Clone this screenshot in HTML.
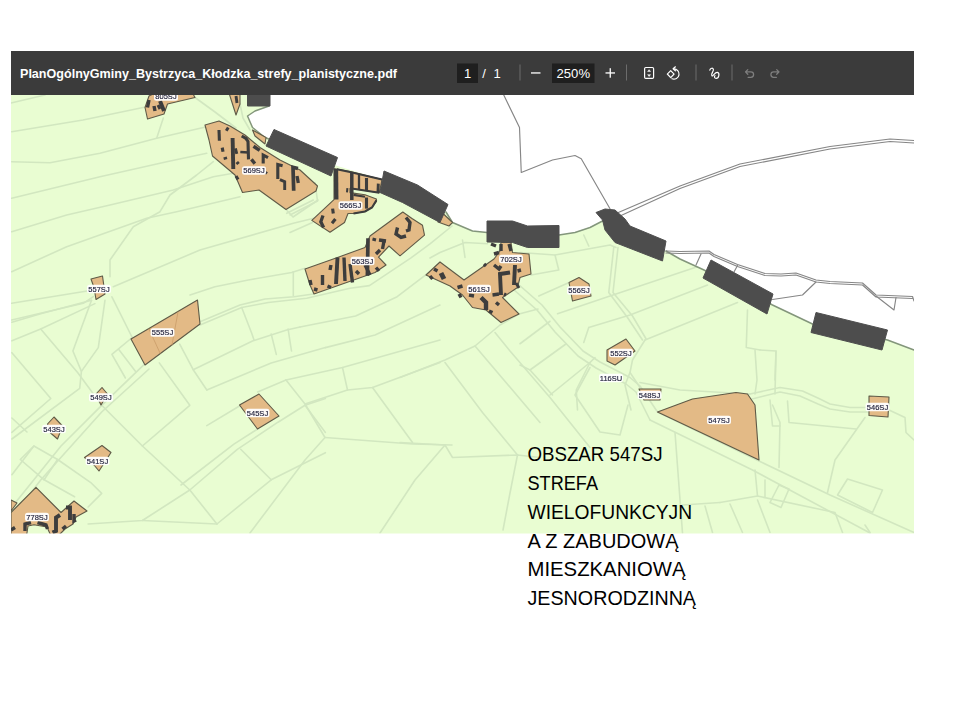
<!DOCTYPE html>
<html lang="pl">
<head>
<meta charset="utf-8">
<title>Obszar 547SJ</title>
<style>
html,body{margin:0;padding:0;background:#ffffff;}
body{width:960px;height:720px;overflow:hidden;position:relative;font-family:"Liberation Sans",sans-serif;}
svg{display:block}
</style>
</head>
<body>
<svg width="960" height="720" viewBox="0 0 960 720" style="position:absolute;left:0;top:0">
<defs>
<clipPath id="mc"><rect x="11" y="51" width="903" height="482.6"/></clipPath>
<filter id="bl" x="-2%" y="-2%" width="104%" height="104%"><feGaussianBlur stdDeviation="0.7"/></filter>
<filter id="bl2" x="-2%" y="-20%" width="104%" height="140%"><feGaussianBlur stdDeviation="0.35"/></filter>
</defs>
<rect x="0" y="0" width="960" height="720" fill="#ffffff"/>
<g clip-path="url(#mc)">
<g filter="url(#bl)">
<rect x="5" y="85" width="915" height="455" fill="#e9fdd2"/>
<polyline points="11,103 45,95" fill="none" stroke="#d2e7c0" stroke-width="1.6" stroke-linejoin="round" stroke-linecap="round" />
<polyline points="11.7,131.7 83,120 146.7,106.7" fill="none" stroke="#d2e7c0" stroke-width="1.6" stroke-linejoin="round" stroke-linecap="round" />
<polyline points="11.7,161.7 50,162.7 100,153.3 156.7,138.3 206.7,126.7" fill="none" stroke="#d2e7c0" stroke-width="1.6" stroke-linejoin="round" stroke-linecap="round" />
<polyline points="156.7,138.3 163.3,118" fill="none" stroke="#d2e7c0" stroke-width="1.6" stroke-linejoin="round" stroke-linecap="round" />
<polyline points="11.7,198.3 100,176.7 166.7,161.7 206.7,153.3" fill="none" stroke="#d2e7c0" stroke-width="1.6" stroke-linejoin="round" stroke-linecap="round" />
<polyline points="11.7,231.7 66.7,215 110,205 173.3,190 213.3,176.7 233.3,173.3" fill="none" stroke="#d2e7c0" stroke-width="1.6" stroke-linejoin="round" stroke-linecap="round" />
<polyline points="11.7,271.7 66.7,246.7 146.7,218.3 176.7,211.7 240,196.7" fill="none" stroke="#d2e7c0" stroke-width="1.6" stroke-linejoin="round" stroke-linecap="round" />
<polyline points="110,276.7 110,260 133.3,226.7 160,211.7 170,195 196.7,175 213.3,161.7" fill="none" stroke="#d2e7c0" stroke-width="1.6" stroke-linejoin="round" stroke-linecap="round" />
<polyline points="113.3,286.7 200,250 293.3,223.3 320,216.7" fill="none" stroke="#d2e7c0" stroke-width="1.6" stroke-linejoin="round" stroke-linecap="round" />
<polyline points="190,295 215,286.7 248.3,280 291.7,272.5 305,268.3" fill="none" stroke="#d2e7c0" stroke-width="1.6" stroke-linejoin="round" stroke-linecap="round" />
<polyline points="293.3,271.7 293.3,296" fill="none" stroke="#d2e7c0" stroke-width="1.6" stroke-linejoin="round" stroke-linecap="round" />
<polyline points="11.7,303.3 93.3,290" fill="none" stroke="#d2e7c0" stroke-width="1.6" stroke-linejoin="round" stroke-linecap="round" />
<polyline points="11.7,320 83.3,303.3 93.3,296.7" fill="none" stroke="#d2e7c0" stroke-width="1.6" stroke-linejoin="round" stroke-linecap="round" />
<polyline points="286.7,213.3 313.3,200" fill="none" stroke="#d2e7c0" stroke-width="1.6" stroke-linejoin="round" stroke-linecap="round" />
<polyline points="240,104 243,118 250,130" fill="none" stroke="#d2e7c0" stroke-width="1.6" stroke-linejoin="round" stroke-linecap="round" />
<polyline points="195,97.5 215,112 236,128" fill="none" stroke="#d2e7c0" stroke-width="1.6" stroke-linejoin="round" stroke-linecap="round" />
<polyline points="286,209.5 293,217 318,200" fill="none" stroke="#d2e7c0" stroke-width="1.6" stroke-linejoin="round" stroke-linecap="round" />
<polyline points="462.5,240 465,257.5" fill="none" stroke="#d2e7c0" stroke-width="1.6" stroke-linejoin="round" stroke-linecap="round" />
<polyline points="290,215 317.5,201 315,182.5" fill="none" stroke="#d2e7c0" stroke-width="1.6" stroke-linejoin="round" stroke-linecap="round" />
<polyline points="290,232.5 312.5,222.5" fill="none" stroke="#d2e7c0" stroke-width="1.6" stroke-linejoin="round" stroke-linecap="round" />
<polyline points="144,364.6 101.7,405.3 61,446 33.9,479.8 11.9,507" fill="none" stroke="#d2e7c0" stroke-width="1.6" stroke-linejoin="round" stroke-linecap="round" />
<polyline points="149,369 101.7,412 40.7,480 20,507" fill="none" stroke="#d2e7c0" stroke-width="1.6" stroke-linejoin="round" stroke-linecap="round" />
<polyline points="111.9,296.8 132.2,337.5" fill="none" stroke="#d2e7c0" stroke-width="1.6" stroke-linejoin="round" stroke-linecap="round" />
<polyline points="11.9,322.2 40.7,313.7 91.5,300.2" fill="none" stroke="#d2e7c0" stroke-width="1.6" stroke-linejoin="round" stroke-linecap="round" />
<polyline points="11.9,340.8 40.7,329 94.9,303.6" fill="none" stroke="#d2e7c0" stroke-width="1.6" stroke-linejoin="round" stroke-linecap="round" />
<polyline points="40.7,329 78,373 101.7,405.3" fill="none" stroke="#d2e7c0" stroke-width="1.6" stroke-linejoin="round" stroke-linecap="round" />
<polyline points="91.5,300.2 72.9,351 81.4,371.4 79.7,388.3 11.9,439" fill="none" stroke="#d2e7c0" stroke-width="1.6" stroke-linejoin="round" stroke-linecap="round" />
<polyline points="105,300.2 98.3,347.6 81.4,371.4" fill="none" stroke="#d2e7c0" stroke-width="1.6" stroke-linejoin="round" stroke-linecap="round" />
<polyline points="132.2,337.5 111.9,354.4 125.4,378" fill="none" stroke="#d2e7c0" stroke-width="1.6" stroke-linejoin="round" stroke-linecap="round" />
<polyline points="118.6,349.3 135.6,371.4" fill="none" stroke="#d2e7c0" stroke-width="1.6" stroke-linejoin="round" stroke-linecap="round" />
<polyline points="11.9,352.7 50.8,398.5 11.9,432.4" fill="none" stroke="#d2e7c0" stroke-width="1.6" stroke-linejoin="round" stroke-linecap="round" />
<polyline points="11.9,418 27,432" fill="none" stroke="#d2e7c0" stroke-width="1.6" stroke-linejoin="round" stroke-linecap="round" />
<polyline points="101.7,405.3 142.4,446 189.8,490 216.9,524" fill="none" stroke="#d2e7c0" stroke-width="1.6" stroke-linejoin="round" stroke-linecap="round" />
<polyline points="142.4,446 189.8,405.3 159.3,362.9" fill="none" stroke="#d2e7c0" stroke-width="1.6" stroke-linejoin="round" stroke-linecap="round" />
<polyline points="193.2,369.7 252.5,341 286.7,330 300,327" fill="none" stroke="#d2e7c0" stroke-width="1.6" stroke-linejoin="round" stroke-linecap="round" />
<polyline points="206.8,390 271.2,362.9 325.4,347.6" fill="none" stroke="#d2e7c0" stroke-width="1.6" stroke-linejoin="round" stroke-linecap="round" />
<polyline points="179.7,344.2 193.2,369.7 206.8,390" fill="none" stroke="#d2e7c0" stroke-width="1.6" stroke-linejoin="round" stroke-linecap="round" />
<polyline points="241.7,307.5 251.7,333.3 254,340" fill="none" stroke="#d2e7c0" stroke-width="1.6" stroke-linejoin="round" stroke-linecap="round" />
<polyline points="271.2,334 276.3,354.4" fill="none" stroke="#d2e7c0" stroke-width="1.6" stroke-linejoin="round" stroke-linecap="round" />
<polyline points="288.1,329 291.5,351" fill="none" stroke="#d2e7c0" stroke-width="1.6" stroke-linejoin="round" stroke-linecap="round" />
<polyline points="200,321.7 240,305 265,299 294,296.7 313.3,294" fill="none" stroke="#d2e7c0" stroke-width="1.6" stroke-linejoin="round" stroke-linecap="round" />
<polyline points="200,325 241.7,307.5 268.3,302.5 306.7,298.3 350,288.3 369.4,285.6 411,257.8 430,243.9 452,226" fill="none" stroke="#d2e7c0" stroke-width="1.6" stroke-linejoin="round" stroke-linecap="round" />
<polyline points="206.8,425.6 240.7,405.3" fill="none" stroke="#d2e7c0" stroke-width="1.6" stroke-linejoin="round" stroke-linecap="round" />
<polyline points="189.8,490 237.3,449.3 278,422.2 305,405.3 325.4,398.5" fill="none" stroke="#d2e7c0" stroke-width="1.6" stroke-linejoin="round" stroke-linecap="round" />
<polyline points="181,485 233.9,444.2 257.6,429" fill="none" stroke="#d2e7c0" stroke-width="1.6" stroke-linejoin="round" stroke-linecap="round" />
<polyline points="240.7,449.3 271.2,479.8 216.9,524" fill="none" stroke="#d2e7c0" stroke-width="1.6" stroke-linejoin="round" stroke-linecap="round" />
<polyline points="271.2,479.8 325.4,452.7" fill="none" stroke="#d2e7c0" stroke-width="1.6" stroke-linejoin="round" stroke-linecap="round" />
<polyline points="305,405.3 325.4,432.4" fill="none" stroke="#d2e7c0" stroke-width="1.6" stroke-linejoin="round" stroke-linecap="round" />
<polyline points="11.9,474.7 33.9,446 57.6,459.5 91.5,483.2 101.7,493.4 88.1,507" fill="none" stroke="#d2e7c0" stroke-width="1.6" stroke-linejoin="round" stroke-linecap="round" />
<polyline points="33.9,446 20.3,459.5 44.1,479.8" fill="none" stroke="#d2e7c0" stroke-width="1.6" stroke-linejoin="round" stroke-linecap="round" />
<polyline points="57.6,459.5 44.1,479.8 74.6,496.8" fill="none" stroke="#d2e7c0" stroke-width="1.6" stroke-linejoin="round" stroke-linecap="round" />
<polyline points="88.1,524 142.4,520.5 189.8,490" fill="none" stroke="#d2e7c0" stroke-width="1.6" stroke-linejoin="round" stroke-linecap="round" />
<polyline points="142.4,520.5 216.9,524" fill="none" stroke="#d2e7c0" stroke-width="1.6" stroke-linejoin="round" stroke-linecap="round" />
<polyline points="300,327 355.6,316 397.2,296.7 430,271.7 440,262" fill="none" stroke="#d2e7c0" stroke-width="1.6" stroke-linejoin="round" stroke-linecap="round" />
<polyline points="325.4,347.6 375,335 440,305" fill="none" stroke="#d2e7c0" stroke-width="1.6" stroke-linejoin="round" stroke-linecap="round" />
<polyline points="286,380 342.5,367.5 440,340" fill="none" stroke="#d2e7c0" stroke-width="1.6" stroke-linejoin="round" stroke-linecap="round" />
<polyline points="286,380 305,404 325,437.5 305,460 250,533" fill="none" stroke="#d2e7c0" stroke-width="1.6" stroke-linejoin="round" stroke-linecap="round" />
<polyline points="257.6,392 286,380" fill="none" stroke="#d2e7c0" stroke-width="1.6" stroke-linejoin="round" stroke-linecap="round" />
<polyline points="342.5,367.5 347.5,390" fill="none" stroke="#d2e7c0" stroke-width="1.6" stroke-linejoin="round" stroke-linecap="round" />
<polyline points="305,404 347.5,390 372.5,387.5 440,362.5" fill="none" stroke="#d2e7c0" stroke-width="1.6" stroke-linejoin="round" stroke-linecap="round" />
<polyline points="372.5,387.5 412.5,442.5" fill="none" stroke="#d2e7c0" stroke-width="1.6" stroke-linejoin="round" stroke-linecap="round" />
<polyline points="325,437.5 412.5,444 452,445" fill="none" stroke="#d2e7c0" stroke-width="1.6" stroke-linejoin="round" stroke-linecap="round" />
<polyline points="400,377.5 445,360 475,346 500,325 519,314 538,309" fill="none" stroke="#d2e7c0" stroke-width="1.6" stroke-linejoin="round" stroke-linecap="round" />
<polyline points="445,362.5 482.5,412.5 517.5,455" fill="none" stroke="#d2e7c0" stroke-width="1.6" stroke-linejoin="round" stroke-linecap="round" />
<polyline points="475,346 540,422.5" fill="none" stroke="#d2e7c0" stroke-width="1.6" stroke-linejoin="round" stroke-linecap="round" />
<polyline points="495,332.5 510,351 550,397.5 590,447.5" fill="none" stroke="#d2e7c0" stroke-width="1.6" stroke-linejoin="round" stroke-linecap="round" />
<polyline points="518,284 542,305 560,327 583,351 600,362 630,377.5 640,386 657.5,412" fill="none" stroke="#d2e7c0" stroke-width="1.6" stroke-linejoin="round" stroke-linecap="round" />
<polyline points="513,289 537,310 555,332 578,356 596,368 626,384 636,392 650,420" fill="none" stroke="#d2e7c0" stroke-width="1.6" stroke-linejoin="round" stroke-linecap="round" />
<polyline points="400,442.5 445,445 452.5,457.5 517.5,455 540,457.5" fill="none" stroke="#d2e7c0" stroke-width="1.6" stroke-linejoin="round" stroke-linecap="round" />
<polyline points="445,445 415,480 380,533" fill="none" stroke="#d2e7c0" stroke-width="1.6" stroke-linejoin="round" stroke-linecap="round" />
<polyline points="517.5,455 510,493 503,530" fill="none" stroke="#d2e7c0" stroke-width="1.6" stroke-linejoin="round" stroke-linecap="round" />
<polyline points="430,258 440,252.5 465,242.5 487.5,243.75" fill="none" stroke="#d2e7c0" stroke-width="1.6" stroke-linejoin="round" stroke-linecap="round" />
<polyline points="520,252.5 555,255 558.75,270 531,275" fill="none" stroke="#d2e7c0" stroke-width="1.6" stroke-linejoin="round" stroke-linecap="round" />
<polyline points="555,255 610,245 616,247.5" fill="none" stroke="#d2e7c0" stroke-width="1.6" stroke-linejoin="round" stroke-linecap="round" />
<polyline points="583.75,235 588.75,246" fill="none" stroke="#d2e7c0" stroke-width="1.6" stroke-linejoin="round" stroke-linecap="round" />
<polyline points="613.75,247.5 608.75,292.5 627.5,317.5 642.5,340" fill="none" stroke="#d2e7c0" stroke-width="1.6" stroke-linejoin="round" stroke-linecap="round" />
<polyline points="618,247.5 613,292.5 632.5,316 646,338.75" fill="none" stroke="#d2e7c0" stroke-width="1.6" stroke-linejoin="round" stroke-linecap="round" />
<polyline points="645,340 632.5,360 630,372.5 640,387.5" fill="none" stroke="#d2e7c0" stroke-width="1.6" stroke-linejoin="round" stroke-linecap="round" />
<polyline points="557.5,313.75 610,296 695,267.5 705,263.75" fill="none" stroke="#d2e7c0" stroke-width="1.6" stroke-linejoin="round" stroke-linecap="round" />
<polyline points="588.75,327.5 630,315 707.5,285" fill="none" stroke="#d2e7c0" stroke-width="1.6" stroke-linejoin="round" stroke-linecap="round" />
<polyline points="645,340 737.5,302.5" fill="none" stroke="#d2e7c0" stroke-width="1.6" stroke-linejoin="round" stroke-linecap="round" />
<polyline points="588.75,327.5 583.75,342.5" fill="none" stroke="#d2e7c0" stroke-width="1.6" stroke-linejoin="round" stroke-linecap="round" />
<polyline points="538.75,296 568,283" fill="none" stroke="#d2e7c0" stroke-width="1.6" stroke-linejoin="round" stroke-linecap="round" />
<polyline points="520,343.75 550,321.25" fill="none" stroke="#d2e7c0" stroke-width="1.6" stroke-linejoin="round" stroke-linecap="round" />
<polyline points="530,370 566.25,343.75" fill="none" stroke="#d2e7c0" stroke-width="1.6" stroke-linejoin="round" stroke-linecap="round" />
<polyline points="520,365 530,370 552.5,395" fill="none" stroke="#d2e7c0" stroke-width="1.6" stroke-linejoin="round" stroke-linecap="round" />
<polyline points="550,395 590,362.5 595,357.5" fill="none" stroke="#d2e7c0" stroke-width="1.6" stroke-linejoin="round" stroke-linecap="round" />
<polyline points="577.5,410 576.25,390 590,362.5" fill="none" stroke="#d2e7c0" stroke-width="1.6" stroke-linejoin="round" stroke-linecap="round" />
<polyline points="747.5,310 746.25,347.5 760,350" fill="none" stroke="#d2e7c0" stroke-width="1.6" stroke-linejoin="round" stroke-linecap="round" />
<polyline points="630,372.5 625,385 631,410" fill="none" stroke="#d2e7c0" stroke-width="1.6" stroke-linejoin="round" stroke-linecap="round" />
<polyline points="640,382.5 680,390 750,394" fill="none" stroke="#d2e7c0" stroke-width="1.6" stroke-linejoin="round" stroke-linecap="round" />
<polyline points="760,350 776,351 775,380" fill="none" stroke="#d2e7c0" stroke-width="1.6" stroke-linejoin="round" stroke-linecap="round" />
<polyline points="590,367.5 575,395 600,432 620,435 628,405" fill="none" stroke="#d2e7c0" stroke-width="1.6" stroke-linejoin="round" stroke-linecap="round" />
<polyline points="755,350 757,380 755,394" fill="none" stroke="#d2e7c0" stroke-width="1.6" stroke-linejoin="round" stroke-linecap="round" />
<polyline points="776,351 775,394" fill="none" stroke="#d2e7c0" stroke-width="1.6" stroke-linejoin="round" stroke-linecap="round" />
<polyline points="750,394 780,387.5 802.5,391 820,399 830,404 850,407.5 867.5,407.5" fill="none" stroke="#d2e7c0" stroke-width="1.6" stroke-linejoin="round" stroke-linecap="round" />
<polyline points="752,399 780,392 800,396 818,404 830,409 850,412 868,412" fill="none" stroke="#d2e7c0" stroke-width="1.6" stroke-linejoin="round" stroke-linecap="round" />
<polyline points="772.5,405 780,422.5 779,467.5" fill="none" stroke="#d2e7c0" stroke-width="1.6" stroke-linejoin="round" stroke-linecap="round" />
<polyline points="770,400 772.5,426 780,426" fill="none" stroke="#d2e7c0" stroke-width="1.6" stroke-linejoin="round" stroke-linecap="round" />
<polyline points="787.5,401 789,422.5 856,429" fill="none" stroke="#d2e7c0" stroke-width="1.6" stroke-linejoin="round" stroke-linecap="round" />
<polyline points="865,417.5 835,460 827.5,492.5" fill="none" stroke="#d2e7c0" stroke-width="1.6" stroke-linejoin="round" stroke-linecap="round" />
<polyline points="889,410 905,417.5 906,432.5 914,440" fill="none" stroke="#d2e7c0" stroke-width="1.6" stroke-linejoin="round" stroke-linecap="round" />
<polyline points="847.5,479 882.5,490 872.5,512.5 837.5,495 847.5,479" fill="none" stroke="#d2e7c0" stroke-width="1.6" stroke-linejoin="round" stroke-linecap="round" />
<polyline points="779,485 770,502.5 781,507.5 789,489 779,485" fill="none" stroke="#d2e7c0" stroke-width="1.6" stroke-linejoin="round" stroke-linecap="round" />
<polyline points="765,480 765,497.5" fill="none" stroke="#d2e7c0" stroke-width="1.6" stroke-linejoin="round" stroke-linecap="round" />
<polyline points="720,502.5 757.5,496 755,470" fill="none" stroke="#d2e7c0" stroke-width="1.6" stroke-linejoin="round" stroke-linecap="round" />
<polyline points="730,504 742.5,532.5" fill="none" stroke="#d2e7c0" stroke-width="1.6" stroke-linejoin="round" stroke-linecap="round" />
<polyline points="757.5,500 770,532.5" fill="none" stroke="#d2e7c0" stroke-width="1.6" stroke-linejoin="round" stroke-linecap="round" />
<polyline points="757.5,496 835,512.5 842.5,532.5" fill="none" stroke="#d2e7c0" stroke-width="1.6" stroke-linejoin="round" stroke-linecap="round" />
<polyline points="865,525 870,532.5" fill="none" stroke="#d2e7c0" stroke-width="1.6" stroke-linejoin="round" stroke-linecap="round" />
<polyline points="675,432.5 682.5,533" fill="none" stroke="#d2e7c0" stroke-width="1.6" stroke-linejoin="round" stroke-linecap="round" />
<polyline points="682.5,505 720,502.5" fill="none" stroke="#d2e7c0" stroke-width="1.6" stroke-linejoin="round" stroke-linecap="round" />
<polyline points="705,506 712.5,532.5" fill="none" stroke="#d2e7c0" stroke-width="1.6" stroke-linejoin="round" stroke-linecap="round" />
<polyline points="657.5,412 759,461 830,495 914,532.5" fill="none" stroke="#d2e7c0" stroke-width="1.6" stroke-linejoin="round" stroke-linecap="round" />
<polyline points="650,420 752.5,470 870,533" fill="none" stroke="#d2e7c0" stroke-width="1.6" stroke-linejoin="round" stroke-linecap="round" />
<polygon points="270,90 269,106 255,111 247.5,116 252.5,127.5 265,137.5 274,141 300,152 337.5,166 347.5,169 370,176 384,181 417.5,195 446,212 452.5,222.5 472.5,231 487,232.5 527,236 559,235 575,232.5 590,227.5 602.5,221 615,226 630,236 666,251 680,259 704,270 740,288 772.5,305 812.5,324 850,332 887.5,340 914,350 920,350 920,90" fill="#ffffff" />
<polyline points="269,106 255,111 247.5,116 252.5,127.5 265,137.5 274,141" fill="none" stroke="#83967b" stroke-width="1.5" stroke-linejoin="round" stroke-linecap="round" />
<polyline points="446,212 452.5,222.5 472.5,231 487,232.5" fill="none" stroke="#83967b" stroke-width="1.5" stroke-linejoin="round" stroke-linecap="round" />
<polyline points="559,235 575,232.5 590,227.5 602.5,221" fill="none" stroke="#83967b" stroke-width="1.5" stroke-linejoin="round" stroke-linecap="round" />
<polyline points="666,251 680,259 704,270 740,288 772.5,305 812.5,324 850,332 887.5,340 914,350" fill="none" stroke="#83967b" stroke-width="1.5" stroke-linejoin="round" stroke-linecap="round" />
<polyline points="500,88 503.75,95 519.5,127.5 521.25,172.5 552.5,160 575,155.5 581.25,158.75 610,208.75" fill="none" stroke="#868686" stroke-width="1.15" stroke-linejoin="round" stroke-linecap="round" />
<polyline points="616,213.5 680,186 740,164 830,146.5 890,139 914,140.5" fill="none" stroke="#868686" stroke-width="1.15" stroke-linejoin="round" stroke-linecap="round" />
<polyline points="620,216 680,188.5 740,166.5 830,149 890,141.5 914,143" fill="none" stroke="#868686" stroke-width="1.15" stroke-linejoin="round" stroke-linecap="round" />
<polyline points="666,251 680,251.5 709,251 714,254.5 737.5,264.5 765,273.5 781,274 796,273 816,280 830,281.5 862.5,283 876,295 912.5,296.5 914,301" fill="none" stroke="#868686" stroke-width="1.15" stroke-linejoin="round" stroke-linecap="round" />
<polyline points="666,253 680,253.5 709,253 714,256.5 737.5,266.5 765,275.5 781,276 796,275 816,282 830,283.5 862.5,285 876,297 912.5,298.5" fill="none" stroke="#868686" stroke-width="1.15" stroke-linejoin="round" stroke-linecap="round" />
<polyline points="701,254 696,265" fill="none" stroke="#868686" stroke-width="1.15" stroke-linejoin="round" stroke-linecap="round" />
<polyline points="737.5,265.5 734,272" fill="none" stroke="#868686" stroke-width="1.15" stroke-linejoin="round" stroke-linecap="round" />
<polyline points="772.5,299.5 802.5,295 816,282" fill="none" stroke="#868686" stroke-width="1.15" stroke-linejoin="round" stroke-linecap="round" />
<polyline points="876,296 894,310 896,297.5" fill="none" stroke="#868686" stroke-width="1.15" stroke-linejoin="round" stroke-linecap="round" />
<polygon points="145,107.5 149,96 155,93 192.5,93 195,97.5 167.5,104 164,114 147.5,119" fill="#e3ba86" stroke="#5f5a47" stroke-width="1.1" stroke-linejoin="round" />
<polygon points="229,93 240,93 240,104 236,115" fill="#e3ba86" stroke="#5f5a47" stroke-width="1.1" stroke-linejoin="round" />
<polygon points="252.5,130 266,137.5 265,144 255,136" fill="#e3ba86" stroke="#5f5a47" stroke-width="1.1" stroke-linejoin="round" />
<polygon points="205,125 219,121 230,126 245,135 260,147.5 280,160 300,170 317.5,186 316,191 286,209.5 259,190 242.5,192.5 235,175 212.5,156 209,140" fill="#e3ba86" stroke="#5f5a47" stroke-width="1.1" stroke-linejoin="round" />
<polygon points="334,168.5 350,171.5 382,179.5 379.3,192.8 350,188.3 350,192.6 365,194.7 376.4,199 376.4,201.5 372,207.5 365,211.5 353.5,213.5 348,213.5 344.5,222.5 330,232.2 311.8,220.4 334,199.6" fill="#e3ba86" stroke="#5f5a47" stroke-width="1.1" stroke-linejoin="round" />
<polygon points="442.5,213 452.5,222.5 449,226 438,222" fill="#e3ba86" stroke="#5f5a47" stroke-width="1.1" stroke-linejoin="round" />
<polygon points="305,269 337.5,257.5 365,247.5 370,236 402.8,212 412,218.5 422.5,225.3 424.5,235.2 400,255.8 389,246 378.5,257.2 386,265 375,272.5 314,294 310,285" fill="#e3ba86" stroke="#5f5a47" stroke-width="1.1" stroke-linejoin="round" />
<polygon points="426,275 440,262 464,280 494,259 500,251 501,242.5 511,242.5 512.5,252.5 529,254 531,274 520,277.5 517.5,287.5 502.5,297.5 519,314 501,322.5 486,310 472.5,307.5 462.5,295 450,286" fill="#e3ba86" stroke="#5f5a47" stroke-width="1.1" stroke-linejoin="round" />
<polygon points="569,282.5 579,277.5 589,284 591,296 572.5,301" fill="#e3ba86" stroke="#5f5a47" stroke-width="1.1" stroke-linejoin="round" />
<polygon points="607,350 626,339 635,351 615,365 607,361" fill="#e3ba86" stroke="#5f5a47" stroke-width="1.1" stroke-linejoin="round" />
<polygon points="91,279 102.5,276 105,294 96,299.5 94,287.5" fill="#e3ba86" stroke="#5f5a47" stroke-width="1.1" stroke-linejoin="round" />
<polygon points="131,339 197.5,300 200,324 145,365" fill="#e3ba86" stroke="#5f5a47" stroke-width="1.1" stroke-linejoin="round" />
<polygon points="96,394 102,387.5 107.5,394 101,405" fill="#e3ba86" stroke="#5f5a47" stroke-width="1.1" stroke-linejoin="round" />
<polygon points="47.5,424 54,417 62.5,426 57.5,439 50,432.5" fill="#e3ba86" stroke="#5f5a47" stroke-width="1.1" stroke-linejoin="round" />
<polygon points="84.5,457.5 102,445.5 111,452.5 99,471 94,465" fill="#e3ba86" stroke="#5f5a47" stroke-width="1.1" stroke-linejoin="round" />
<polygon points="11,512.5 36,487.3 61,512.5 74,501 87,511 76,517 73,524 65,529 58,536 51,536 47,527 34,524.8 28,526 26.5,536 11,536" fill="#e3ba86" stroke="#5f5a47" stroke-width="1.1" stroke-linejoin="round" />
<polygon points="11,500 17,503 11,511" fill="#e3ba86" stroke="#5f5a47" stroke-width="1.1" stroke-linejoin="round" />
<polygon points="239.5,405 259,394 279,416 257.5,429" fill="#e3ba86" stroke="#5f5a47" stroke-width="1.1" stroke-linejoin="round" />
<polygon points="639,389 661,389 660,400 644,400" fill="#e3ba86" stroke="#5f5a47" stroke-width="1.1" stroke-linejoin="round" />
<polygon points="657.5,412 692.5,399 736,392.5 747.5,394 755,405 759,460" fill="#e3ba86" stroke="#5f5a47" stroke-width="1.1" stroke-linejoin="round" />
<polygon points="869,396 889,397 888,417 869,415.5" fill="#e3ba86" stroke="#5f5a47" stroke-width="1.1" stroke-linejoin="round" />
<polyline points="149,329 160,353" fill="none" stroke="#c99c68" stroke-width="0.8" stroke-linejoin="round" stroke-linecap="round" />
<polyline points="178,312 172,345" fill="none" stroke="#c99c68" stroke-width="0.8" stroke-linejoin="round" stroke-linecap="round" />
<polygon points="247.5,90 270,90 270,106 247.5,106" fill="#4e4e4e" stroke="#4e4e4e" stroke-width="1" stroke-linejoin="round" />
<polygon points="274,129.5 337.5,157.5 331,176 266,146" fill="#4e4e4e" stroke="#4e4e4e" stroke-width="1" stroke-linejoin="round" />
<polygon points="384,171 417.5,185 448,204.5 440,222.5 402.5,202.5 380,192.5" fill="#4e4e4e" stroke="#4e4e4e" stroke-width="1" stroke-linejoin="round" />
<polygon points="487,221 512.5,221 527.5,226 559,225.5 559,247.5 527.5,247.5 512.5,242.5 487,242" fill="#4e4e4e" stroke="#4e4e4e" stroke-width="1" stroke-linejoin="round" />
<polygon points="596,212.5 605,209 615,210 625,219 630,226 666,241 662.5,261 615,242.5 605,230 602.5,220" fill="#4e4e4e" stroke="#4e4e4e" stroke-width="1" stroke-linejoin="round" />
<polygon points="711,260 773,294 767,314 703,278" fill="#4e4e4e" stroke="#4e4e4e" stroke-width="1" stroke-linejoin="round" />
<polygon points="816,312.5 887.5,330 882,350 811,332.5" fill="#4e4e4e" stroke="#4e4e4e" stroke-width="1" stroke-linejoin="round" />
<polyline points="219,130 219.4,140.7" fill="none" stroke="#3d3d3d" stroke-width="3.1" stroke-linejoin="miter" stroke-linecap="butt"/>
<polyline points="226,128.3 228.5,129.8" fill="none" stroke="#3d3d3d" stroke-width="3.9" stroke-linejoin="miter" stroke-linecap="butt"/>
<polyline points="222.2,147.6 223,151.8" fill="none" stroke="#3d3d3d" stroke-width="3.1" stroke-linejoin="miter" stroke-linecap="butt"/>
<polyline points="225,157 225.7,159.4" fill="none" stroke="#3d3d3d" stroke-width="3.5" stroke-linejoin="miter" stroke-linecap="butt"/>
<polyline points="232.6,138 233.3,169" fill="none" stroke="#3d3d3d" stroke-width="3.9" stroke-linejoin="miter" stroke-linecap="butt"/>
<polyline points="235.4,148.3 236.8,153.9" fill="none" stroke="#3d3d3d" stroke-width="2.9" stroke-linejoin="miter" stroke-linecap="butt"/>
<polyline points="236.8,162 238.5,164" fill="none" stroke="#3d3d3d" stroke-width="3.3" stroke-linejoin="miter" stroke-linecap="butt"/>
<polyline points="236,176 238,179.6" fill="none" stroke="#3d3d3d" stroke-width="3.1" stroke-linejoin="miter" stroke-linecap="butt"/>
<polyline points="241.7,136 246,138.5 248,141.4 248.5,159.4" fill="none" stroke="#3d3d3d" stroke-width="3.1" stroke-linejoin="miter" stroke-linecap="butt"/>
<polyline points="240.3,152 248.6,152.5" fill="none" stroke="#3d3d3d" stroke-width="2.5" stroke-linejoin="miter" stroke-linecap="butt"/>
<polyline points="251.4,159.4 254.9,163.6" fill="none" stroke="#3d3d3d" stroke-width="3.3" stroke-linejoin="miter" stroke-linecap="butt"/>
<polyline points="253.5,146.3 259.7,150.4" fill="none" stroke="#3d3d3d" stroke-width="3.5" stroke-linejoin="miter" stroke-linecap="butt"/>
<polyline points="268,157.6 263.2,155 263.2,163.6" fill="none" stroke="#3d3d3d" stroke-width="3.1" stroke-linejoin="miter" stroke-linecap="butt"/>
<polyline points="265.5,172.3 267,173.6" fill="none" stroke="#3d3d3d" stroke-width="2.7" stroke-linejoin="miter" stroke-linecap="butt"/>
<polyline points="282.6,165.7 277.8,164.5 277.8,178.9" fill="none" stroke="#3d3d3d" stroke-width="3.1" stroke-linejoin="miter" stroke-linecap="butt"/>
<polyline points="279.9,179.6 284.7,181.7 284.7,190" fill="none" stroke="#3d3d3d" stroke-width="2.9" stroke-linejoin="miter" stroke-linecap="butt"/>
<polyline points="298,168.5 293,167.3 293.7,190.7" fill="none" stroke="#3d3d3d" stroke-width="3.6999999999999997" stroke-linejoin="miter" stroke-linecap="butt"/>
<polyline points="297,176 298.3,183" fill="none" stroke="#3d3d3d" stroke-width="3.3" stroke-linejoin="miter" stroke-linecap="butt"/>
<polyline points="149,100 147.5,107.5" fill="none" stroke="#3d3d3d" stroke-width="3.4" stroke-linejoin="miter" stroke-linecap="butt"/>
<polyline points="154,106 155,111" fill="none" stroke="#3d3d3d" stroke-width="3.4" stroke-linejoin="miter" stroke-linecap="butt"/>
<polyline points="160,101 164,111" fill="none" stroke="#3d3d3d" stroke-width="3.9" stroke-linejoin="miter" stroke-linecap="butt"/>
<polyline points="158,105 160,109" fill="none" stroke="#3d3d3d" stroke-width="2.9" stroke-linejoin="miter" stroke-linecap="butt"/>
<polyline points="236,96 237,103" fill="none" stroke="#3d3d3d" stroke-width="2.9" stroke-linejoin="miter" stroke-linecap="butt"/>
<polyline points="336,169 336.3,199.6" fill="none" stroke="#3d3d3d" stroke-width="4.3" stroke-linejoin="miter" stroke-linecap="butt"/>
<polyline points="351.8,173 351.8,200" fill="none" stroke="#3d3d3d" stroke-width="3.5" stroke-linejoin="miter" stroke-linecap="butt"/>
<polyline points="366.5,178 366.5,190" fill="none" stroke="#3d3d3d" stroke-width="3.1" stroke-linejoin="miter" stroke-linecap="butt"/>
<polyline points="366.5,197.5 366.5,208.6" fill="none" stroke="#3d3d3d" stroke-width="3.1" stroke-linejoin="miter" stroke-linecap="butt"/>
<polyline points="378.3,183.6 378,192" fill="none" stroke="#3d3d3d" stroke-width="2.9" stroke-linejoin="miter" stroke-linecap="butt"/>
<polyline points="336.8,169.2 350,172 382,179.6" fill="none" stroke="#3d3d3d" stroke-width="2.1" stroke-linejoin="miter" stroke-linecap="butt"/>
<polyline points="346.2,190.2 348.2,190.4" fill="none" stroke="#3d3d3d" stroke-width="4.3" stroke-linejoin="miter" stroke-linecap="butt"/>
<polyline points="350,188.3 379.3,192.8" fill="none" stroke="#3d3d3d" stroke-width="2.1" stroke-linejoin="miter" stroke-linecap="butt"/>
<polyline points="353.5,194.9 365,196.8" fill="none" stroke="#3d3d3d" stroke-width="2.1" stroke-linejoin="miter" stroke-linecap="butt"/>
<polyline points="376.4,200.3 372,207.5 365,211.5 353.5,213.5" fill="none" stroke="#3d3d3d" stroke-width="2.1" stroke-linejoin="miter" stroke-linecap="butt"/>
<polyline points="359,175 359,189.5" fill="none" stroke="#3d3d3d" stroke-width="2.3" stroke-linejoin="miter" stroke-linecap="butt"/>
<polyline points="332.6,208.6 333.3,213.5" fill="none" stroke="#3d3d3d" stroke-width="3.1" stroke-linejoin="miter" stroke-linecap="butt"/>
<polyline points="323,215.5 320.8,221.8 323.6,227.4" fill="none" stroke="#3d3d3d" stroke-width="3.3" stroke-linejoin="miter" stroke-linecap="butt"/>
<polyline points="335.4,219 332,223.2" fill="none" stroke="#3d3d3d" stroke-width="3.1" stroke-linejoin="miter" stroke-linecap="butt"/>
<polyline points="406,217.5 410,222.5 409,230 406,231" fill="none" stroke="#3d3d3d" stroke-width="3.4" stroke-linejoin="miter" stroke-linecap="butt"/>
<polyline points="397.5,227.5 396,234 401,237.5 406,236" fill="none" stroke="#3d3d3d" stroke-width="3.4" stroke-linejoin="miter" stroke-linecap="butt"/>
<polyline points="368,238.3 367.4,275.8" fill="none" stroke="#3d3d3d" stroke-width="3.6999999999999997" stroke-linejoin="miter" stroke-linecap="butt"/>
<polyline points="372.5,239 376,240" fill="none" stroke="#3d3d3d" stroke-width="2.9" stroke-linejoin="miter" stroke-linecap="butt"/>
<polyline points="379,240 386,241" fill="none" stroke="#3d3d3d" stroke-width="3.4" stroke-linejoin="miter" stroke-linecap="butt"/>
<polyline points="384,241 382.5,249" fill="none" stroke="#3d3d3d" stroke-width="3.4" stroke-linejoin="miter" stroke-linecap="butt"/>
<polyline points="376,254 380,250" fill="none" stroke="#3d3d3d" stroke-width="3.4" stroke-linejoin="miter" stroke-linecap="butt"/>
<polyline points="337.5,257.5 336,284" fill="none" stroke="#3d3d3d" stroke-width="3.9" stroke-linejoin="miter" stroke-linecap="butt"/>
<polyline points="344,257.5 345,281" fill="none" stroke="#3d3d3d" stroke-width="3.4" stroke-linejoin="miter" stroke-linecap="butt"/>
<polyline points="350,264 352.5,282.5" fill="none" stroke="#3d3d3d" stroke-width="3.4" stroke-linejoin="miter" stroke-linecap="butt"/>
<polyline points="331,265 330,270" fill="none" stroke="#3d3d3d" stroke-width="3.4" stroke-linejoin="miter" stroke-linecap="butt"/>
<polyline points="322.5,275 322.5,285" fill="none" stroke="#3d3d3d" stroke-width="3.4" stroke-linejoin="miter" stroke-linecap="butt"/>
<polyline points="310,280 311,285" fill="none" stroke="#3d3d3d" stroke-width="3.4" stroke-linejoin="miter" stroke-linecap="butt"/>
<polyline points="314,289 317.5,290" fill="none" stroke="#3d3d3d" stroke-width="3.4" stroke-linejoin="miter" stroke-linecap="butt"/>
<polyline points="327.5,286 331,287.5" fill="none" stroke="#3d3d3d" stroke-width="3.4" stroke-linejoin="miter" stroke-linecap="butt"/>
<polyline points="356,271 359,274" fill="none" stroke="#3d3d3d" stroke-width="3.4" stroke-linejoin="miter" stroke-linecap="butt"/>
<polyline points="365,265 370,275" fill="none" stroke="#3d3d3d" stroke-width="3.4" stroke-linejoin="miter" stroke-linecap="butt"/>
<polyline points="376,267.5 379,271" fill="none" stroke="#3d3d3d" stroke-width="3.4" stroke-linejoin="miter" stroke-linecap="butt"/>
<polyline points="491,244 496,246" fill="none" stroke="#3d3d3d" stroke-width="3.4" stroke-linejoin="miter" stroke-linecap="butt"/>
<polyline points="501,244 501,251" fill="none" stroke="#3d3d3d" stroke-width="3.4" stroke-linejoin="miter" stroke-linecap="butt"/>
<polyline points="509,244 511,251" fill="none" stroke="#3d3d3d" stroke-width="3.4" stroke-linejoin="miter" stroke-linecap="butt"/>
<polyline points="494,254 499,252.5" fill="none" stroke="#3d3d3d" stroke-width="3.4" stroke-linejoin="miter" stroke-linecap="butt"/>
<polyline points="484,264 486,266" fill="none" stroke="#3d3d3d" stroke-width="3.4" stroke-linejoin="miter" stroke-linecap="butt"/>
<polyline points="494,265 499,269 501,266" fill="none" stroke="#3d3d3d" stroke-width="3.4" stroke-linejoin="miter" stroke-linecap="butt"/>
<polyline points="515,265 514,285" fill="none" stroke="#3d3d3d" stroke-width="3.9" stroke-linejoin="miter" stroke-linecap="butt"/>
<polyline points="510,272.5 500,274 501,295" fill="none" stroke="#3d3d3d" stroke-width="3.9" stroke-linejoin="miter" stroke-linecap="butt"/>
<polyline points="517.5,271 521,270" fill="none" stroke="#3d3d3d" stroke-width="3.4" stroke-linejoin="miter" stroke-linecap="butt"/>
<polyline points="441,273 444,279" fill="none" stroke="#3d3d3d" stroke-width="4.9" stroke-linejoin="miter" stroke-linecap="butt"/>
<polyline points="457.5,287.5 462.5,286" fill="none" stroke="#3d3d3d" stroke-width="3.4" stroke-linejoin="miter" stroke-linecap="butt"/>
<polyline points="459,294 461,297.5" fill="none" stroke="#3d3d3d" stroke-width="3.4" stroke-linejoin="miter" stroke-linecap="butt"/>
<polyline points="469,295 474,296" fill="none" stroke="#3d3d3d" stroke-width="3.4" stroke-linejoin="miter" stroke-linecap="butt"/>
<polyline points="481,297.5 486,302.5 486,310" fill="none" stroke="#3d3d3d" stroke-width="4.4" stroke-linejoin="miter" stroke-linecap="butt"/>
<polyline points="492.5,295 499,294" fill="none" stroke="#3d3d3d" stroke-width="3.4" stroke-linejoin="miter" stroke-linecap="butt"/>
<polyline points="496,302.5 499,305" fill="none" stroke="#3d3d3d" stroke-width="3.4" stroke-linejoin="miter" stroke-linecap="butt"/>
<polyline points="504,294 506,295" fill="none" stroke="#3d3d3d" stroke-width="3.4" stroke-linejoin="miter" stroke-linecap="butt"/>
<polyline points="489,311 492.5,312.5" fill="none" stroke="#3d3d3d" stroke-width="3.4" stroke-linejoin="miter" stroke-linecap="butt"/>
<polyline points="434,269 437.5,271" fill="none" stroke="#3d3d3d" stroke-width="3.4" stroke-linejoin="miter" stroke-linecap="butt"/>
<polyline points="430,276 432.5,279" fill="none" stroke="#3d3d3d" stroke-width="3.4" stroke-linejoin="miter" stroke-linecap="butt"/>
<polyline points="516,283 519,288" fill="none" stroke="#3d3d3d" stroke-width="2.9" stroke-linejoin="miter" stroke-linecap="butt"/>
<polyline points="11,530 15,527.5" fill="none" stroke="#3d3d3d" stroke-width="3.4" stroke-linejoin="miter" stroke-linecap="butt"/>
<polyline points="25,531 25,524 31,522.5" fill="none" stroke="#3d3d3d" stroke-width="3.4" stroke-linejoin="miter" stroke-linecap="butt"/>
<polyline points="37.5,522.5 46,525 47.5,529" fill="none" stroke="#3d3d3d" stroke-width="3.4" stroke-linejoin="miter" stroke-linecap="butt"/>
<polyline points="52.5,532.5 56,531 56,517.5 60,515" fill="none" stroke="#3d3d3d" stroke-width="3.9" stroke-linejoin="miter" stroke-linecap="butt"/>
<polyline points="66,507.5 70,507.5 70,520" fill="none" stroke="#3d3d3d" stroke-width="3.9" stroke-linejoin="miter" stroke-linecap="butt"/>
<polyline points="74,514 74,521 76,520" fill="none" stroke="#3d3d3d" stroke-width="3.4" stroke-linejoin="miter" stroke-linecap="butt"/>
<polyline points="62.5,529 66,526" fill="none" stroke="#3d3d3d" stroke-width="3.4" stroke-linejoin="miter" stroke-linecap="butt"/>
</g>
<g filter="url(#bl2)" font-family="Liberation Sans, sans-serif" font-size="7.5" text-anchor="middle">
<rect x="154" y="92.2" width="24" height="8.6" rx="2.5" fill="#ffffff" fill-opacity="0.95"/>
<text x="166" y="99.3" fill="#1b1b36" stroke="#1b1b36" stroke-width="0.15">805SJ</text>
<rect x="242" y="166.2" width="24" height="8.6" rx="2.5" fill="#ffffff" fill-opacity="0.95"/>
<text x="254" y="173.3" fill="#1b1b36" stroke="#1b1b36" stroke-width="0.15">569SJ</text>
<rect x="338.5" y="201.2" width="24" height="8.6" rx="2.5" fill="#ffffff" fill-opacity="0.95"/>
<text x="350.5" y="208.3" fill="#1b1b36" stroke="#1b1b36" stroke-width="0.15">566SJ</text>
<rect x="350.5" y="256.7" width="24" height="8.6" rx="2.5" fill="#ffffff" fill-opacity="0.95"/>
<text x="362.5" y="263.8" fill="#1b1b36" stroke="#1b1b36" stroke-width="0.15">563SJ</text>
<rect x="499" y="254.7" width="24" height="8.6" rx="2.5" fill="#ffffff" fill-opacity="0.95"/>
<text x="511" y="261.8" fill="#1b1b36" stroke="#1b1b36" stroke-width="0.15">702SJ</text>
<rect x="467" y="284.7" width="24" height="8.6" rx="2.5" fill="#ffffff" fill-opacity="0.95"/>
<text x="479" y="291.8" fill="#1b1b36" stroke="#1b1b36" stroke-width="0.15">561SJ</text>
<rect x="567" y="286.2" width="24" height="8.6" rx="2.5" fill="#ffffff" fill-opacity="0.95"/>
<text x="579" y="293.3" fill="#1b1b36" stroke="#1b1b36" stroke-width="0.15">556SJ</text>
<rect x="609" y="348.7" width="24" height="8.6" rx="2.5" fill="#ffffff" fill-opacity="0.95"/>
<text x="621" y="355.8" fill="#1b1b36" stroke="#1b1b36" stroke-width="0.15">552SJ</text>
<rect x="599" y="373.7" width="24" height="8.6" rx="2.5" fill="#ffffff" fill-opacity="0.95"/>
<text x="611" y="380.8" fill="#1b1b36" stroke="#1b1b36" stroke-width="0.15">116SU</text>
<rect x="87" y="284.7" width="24" height="8.6" rx="2.5" fill="#ffffff" fill-opacity="0.95"/>
<text x="99" y="291.8" fill="#1b1b36" stroke="#1b1b36" stroke-width="0.15">557SJ</text>
<rect x="150.5" y="328.2" width="24" height="8.6" rx="2.5" fill="#ffffff" fill-opacity="0.95"/>
<text x="162.5" y="335.3" fill="#1b1b36" stroke="#1b1b36" stroke-width="0.15">555SJ</text>
<rect x="89" y="393.2" width="24" height="8.6" rx="2.5" fill="#ffffff" fill-opacity="0.95"/>
<text x="101" y="400.3" fill="#1b1b36" stroke="#1b1b36" stroke-width="0.15">549SJ</text>
<rect x="42" y="424.7" width="24" height="8.6" rx="2.5" fill="#ffffff" fill-opacity="0.95"/>
<text x="54" y="431.8" fill="#1b1b36" stroke="#1b1b36" stroke-width="0.15">543SJ</text>
<rect x="85.5" y="456.7" width="24" height="8.6" rx="2.5" fill="#ffffff" fill-opacity="0.95"/>
<text x="97.5" y="463.8" fill="#1b1b36" stroke="#1b1b36" stroke-width="0.15">541SJ</text>
<rect x="25" y="512.7" width="24" height="8.6" rx="2.5" fill="#ffffff" fill-opacity="0.95"/>
<text x="37" y="519.8" fill="#1b1b36" stroke="#1b1b36" stroke-width="0.15">778SJ</text>
<rect x="245.5" y="408.7" width="24" height="8.6" rx="2.5" fill="#ffffff" fill-opacity="0.95"/>
<text x="257.5" y="415.8" fill="#1b1b36" stroke="#1b1b36" stroke-width="0.15">545SJ</text>
<rect x="637.5" y="390.7" width="24" height="8.6" rx="2.5" fill="#ffffff" fill-opacity="0.95"/>
<text x="649.5" y="397.8" fill="#1b1b36" stroke="#1b1b36" stroke-width="0.15">548SJ</text>
<rect x="707" y="415.7" width="24" height="8.6" rx="2.5" fill="#ffffff" fill-opacity="0.95"/>
<text x="719" y="422.8" fill="#1b1b36" stroke="#1b1b36" stroke-width="0.15">547SJ</text>
<rect x="865.5" y="402.7" width="24" height="8.6" rx="2.5" fill="#ffffff" fill-opacity="0.95"/>
<text x="877.5" y="409.8" fill="#1b1b36" stroke="#1b1b36" stroke-width="0.15">546SJ</text>
</g>
<rect x="11" y="51" width="903" height="44" fill="#3b3b3b"/>
<g font-family="Liberation Sans, sans-serif" fill="#ffffff">
<text x="20" y="78.3" font-size="13.5" font-weight="bold" textLength="377" lengthAdjust="spacingAndGlyphs">PlanOgólnyGminy_Bystrzyca_Kłodzka_strefy_planistyczne.pdf</text>
<rect x="457" y="63.5" width="21" height="19.5" fill="#1f1f1f"/>
<text x="467.5" y="77.8" font-size="13" text-anchor="middle">1</text>
<text x="484" y="77.8" font-size="13" text-anchor="middle">/</text>
<text x="497" y="77.8" font-size="13" text-anchor="middle">1</text>
<rect x="552" y="63.5" width="42.5" height="19.5" fill="#1f1f1f"/>
<text x="573.3" y="77.8" font-size="13" text-anchor="middle" textLength="33.5" lengthAdjust="spacingAndGlyphs">250%</text>
</g>
<rect x="519.5" y="64.5" width="1" height="16" fill="#6c6c6c"/>
<rect x="626.0" y="64.5" width="1" height="16" fill="#6c6c6c"/>
<rect x="695.5" y="64.5" width="1" height="16" fill="#6c6c6c"/>
<rect x="731.5" y="64.5" width="1" height="16" fill="#6c6c6c"/>
<rect x="531" y="72.3" width="9.5" height="1.3" fill="#ffffff"/>
<rect x="605.5" y="72.3" width="9.5" height="1.3" fill="#ffffff"/>
<rect x="609.6" y="68.2" width="1.3" height="9.5" fill="#ffffff"/>
<g fill="none" stroke="#ffffff" stroke-width="1.2" stroke-linecap="round" stroke-linejoin="round">
<rect x="644.6" y="67.5" width="9" height="10.9" rx="1.2"/>
<path d="M647.9 71.2l1.2-1.5 1.2 1.5z M647.9 74.9l1.2 1.5 1.2-1.5z" fill="#ffffff" stroke-width="0.6"/>
<path d="M673.6 68.8 A5.2 5.2 0 1 1 671.9 78.8"/>
<path d="M675.4 66.8 l-2.3 2 2.3 2"/>
<rect x="-2.4" y="-2.4" width="4.8" height="4.8" transform="translate(670.7 74.1) rotate(45)"/>
<path transform="translate(0.4 0)" d="M709.4 70.2 C709.8 68.2 712.8 67.2 713 69.6 C713.2 71.6 710.2 74 711.4 75.6 C712.8 77.2 714.4 71.8 717 72.4 C719.6 73 718.6 78.4 715.8 78.4 C714 78.4 713.6 76.6 714.6 75.6"/>
</g>
<g fill="none" stroke="#7e7e7e" stroke-width="1.3" stroke-linecap="round" stroke-linejoin="round">
<path d="M747.8 69.6 l-2.3 2.3 2.3 2.3 M745.7 71.9 h5.2 a2.7 2.7 0 0 1 0 5.4 h-2.8"/>
<path d="M776.7 69.6 l2.3 2.3 -2.3 2.3 M778.8 71.9 h-5.2 a2.7 2.7 0 0 0 0 5.4 h2.8"/>
</g>
</g>
<g font-family="Liberation Sans, sans-serif" font-size="21" fill="#000000">
<text x="527.5" y="461.2" textLength="135" lengthAdjust="spacingAndGlyphs">OBSZAR 547SJ</text>
<text x="527.5" y="490.0" textLength="70.5" lengthAdjust="spacingAndGlyphs">STREFA</text>
<text x="527.5" y="518.8" textLength="164.6" lengthAdjust="spacingAndGlyphs">WIELOFUNKCYJN</text>
<text x="527.5" y="547.6" textLength="151" lengthAdjust="spacingAndGlyphs">A Z ZABUDOWĄ</text>
<text x="527.5" y="576.4" textLength="158" lengthAdjust="spacingAndGlyphs">MIESZKANIOWĄ</text>
<text x="527.5" y="605.2" textLength="168.5" lengthAdjust="spacingAndGlyphs">JESNORODZINNĄ</text>
</g>
</svg>
</body>
</html>
